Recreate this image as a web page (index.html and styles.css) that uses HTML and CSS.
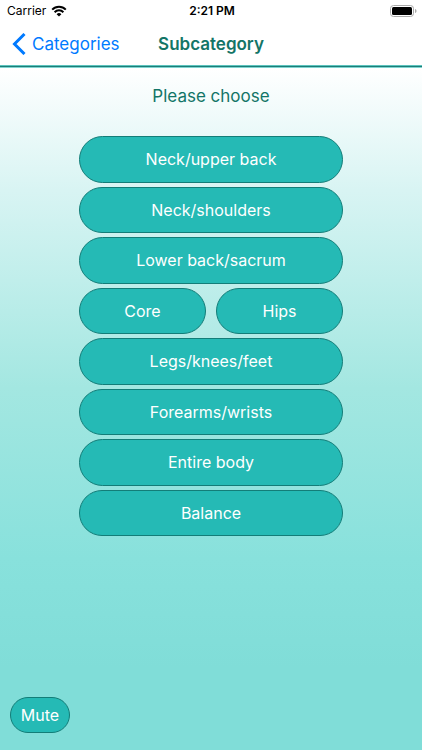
FILE: index.html
```html
<!DOCTYPE html>
<html lang="en">
<head>
    <meta charset="UTF-8">
    <meta name="viewport" content="width=device-width, initial-scale=1.0">
    <title>Subcategory</title>
    <link rel="stylesheet" href="styles.css">
</head>
<body>

    <!-- Status Bar -->
    <div class="status-bar">
        <div class="carrier">
            <span>Carrier</span>
            <svg class="wifi" viewBox="0 0 16 12" width="16" height="12">
                <path d="M1.2 4.6a9.6 9.6 0 0 1 13.6 0" fill="none" stroke="#000" stroke-width="2"/>
                <path d="M3.6 7.2a6.2 6.2 0 0 1 8.8 0" fill="none" stroke="#000" stroke-width="2"/>
                <path d="M8 11.6L5.6 9.2a3.4 3.4 0 0 1 4.8 0z"/>
            </svg>
        </div>
        <div class="time">2:21 PM</div>
        <svg class="battery" viewBox="0 0 27 12" width="27" height="12">
            <rect x="0.5" y="0.5" width="23" height="11" rx="3" fill="none" stroke="#aaa"/>
            <rect x="2" y="2" width="20" height="8" rx="1.5"/>
            <path d="M25 4v4c1-.4 1.5-1.1 1.5-2S26 4.400 25 4z" fill="#aaa"/>
        </svg>
    </div>

    <!-- Navigation Bar -->
    <div class="navbar">
        <a class="back" href="#">
            <svg viewBox="0 0 14 22" width="14" height="22">
                <path d="M12.500 1L2.500 11 12.500 21" fill="none" stroke="#007aff" stroke-width="3"/>
            </svg>
            <span>Categories</span>
        </a>
        <h1>Subcategory</h1>
    </div>

    <!-- Main Content -->
    <div class="container">
        <h2>Please choose</h2>
        <div class="choices">
            <button type="button">Neck/upper back</button>
            <button type="button">Neck/shoulders</button>
            <button type="button">Lower back/sacrum</button>
            <div class="row">
                <button type="button">Core</button>
                <button type="button">Hips</button>
            </div>
            <button type="button">Legs/knees/feet</button>
            <button type="button">Forearms/wrists</button>
            <button type="button">Entire body</button>
            <button type="button">Balance</button>
        </div>
        <button type="button" class="mute">Mute</button>
    </div>

</body>
</html>
```

FILE: styles.css
```css
/* Global Styles */
* {
    box-sizing: border-box;
}
body {
    font-family: Inter, sans-serif;
    margin: 0;
    min-height: 100vh;
    display: flex;
    flex-direction: column;
    text-align: center;
}
.status-bar {
    display: grid;
    grid-template-columns: 1fr auto 1fr;
    align-items: center;
    height: 21px;
    padding: 0 5px 0 7px;
    font-size: 12px;
}
.carrier {
    display: flex;
    align-items: center;
    gap: 5px;
}
.time {
    font-weight: 600;
}
.battery {
    justify-self: end;
}
.navbar {
    display: grid;
    grid-template-columns: 1fr auto 1fr;
    align-items: center;
    height: 46px;
    padding: 0 12px;
    border-bottom: 1px solid #1c7d78;
    box-shadow: inset 0 -1px #5cc4be;
}
.back {
    display: flex;
    align-items: center;
    gap: 6px;
    color: #007aff;
    font-size: 17px;
    text-decoration: none;
}
h1 {
    margin: 0;
    color: #137567;
    font-size: 17px;
    font-weight: 600;
}
.container {
    flex: 1;
    display: flex;
    flex-direction: column;
    align-items: center;
    padding: 17px 10px;
    border-top: 1px solid #7fd6d1;
    background: linear-gradient(#ffffff, #d8f4f3 18%, #a3e7e1 47%, #88e1dc 72%, #80ddd8 88%);
}
h2 {
    margin: 0 0 29px;
    color: #137567;
    font-size: 17px;
    font-weight: 400;
    line-height: 22px;
}
.choices {
    display: grid;
    grid-auto-rows: 1fr;
    gap: 4px;
    width: 66%;
    max-width: 264px;
    min-height: 400px;
}
.row {
    display: flex;
    gap: 10px;
}
button {
    width: 100%;
    padding: 0;
    border: 1px solid #137d78;
    border-radius: 24px;
    background-color: #25bab5;
    color: white;
    font-family: inherit;
    font-size: 16px;
    cursor: pointer;
}
.mute {
    align-self: flex-start;
    width: 60px;
    height: 36px;
    margin-top: auto;
}
```
